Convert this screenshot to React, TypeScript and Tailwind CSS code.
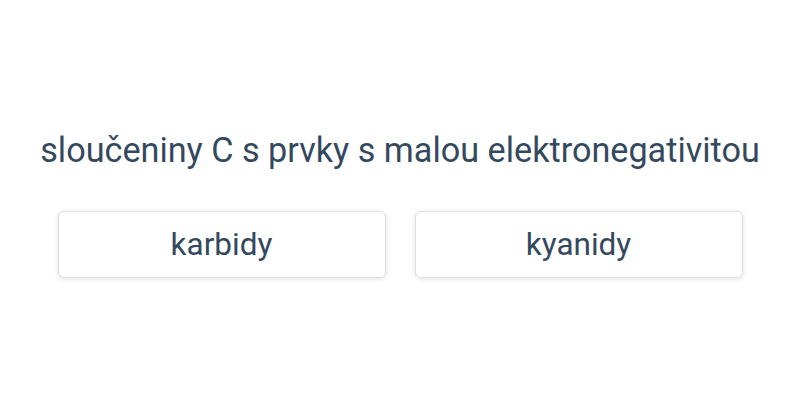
export default function App() {
  const options = ["karbidy", "kyanidy"];
  return (
    <div className="h-[400px] w-[800px] bg-white font-['Roboto',sans-serif] text-[#34495e]">
      <div className="flex flex-col items-center pt-[127px]">
        <h1 className="text-[34.2px] leading-[46px] font-normal">
          sloučeniny C s prvky s malou elektronegativitou
        </h1>
        <div className="mt-[38px] flex gap-[29px]">
          {options.map((o) => (
            <button
              key={o}
              className="h-[67px] w-[328px] rounded-md border border-[#e0e0e0] bg-white text-[31.5px] leading-none text-[#34495e] shadow-[0_1px_5px_rgba(0,0,0,0.12)]"
            >
              {o}
            </button>
          ))}
        </div>
      </div>
    </div>
  );
}
